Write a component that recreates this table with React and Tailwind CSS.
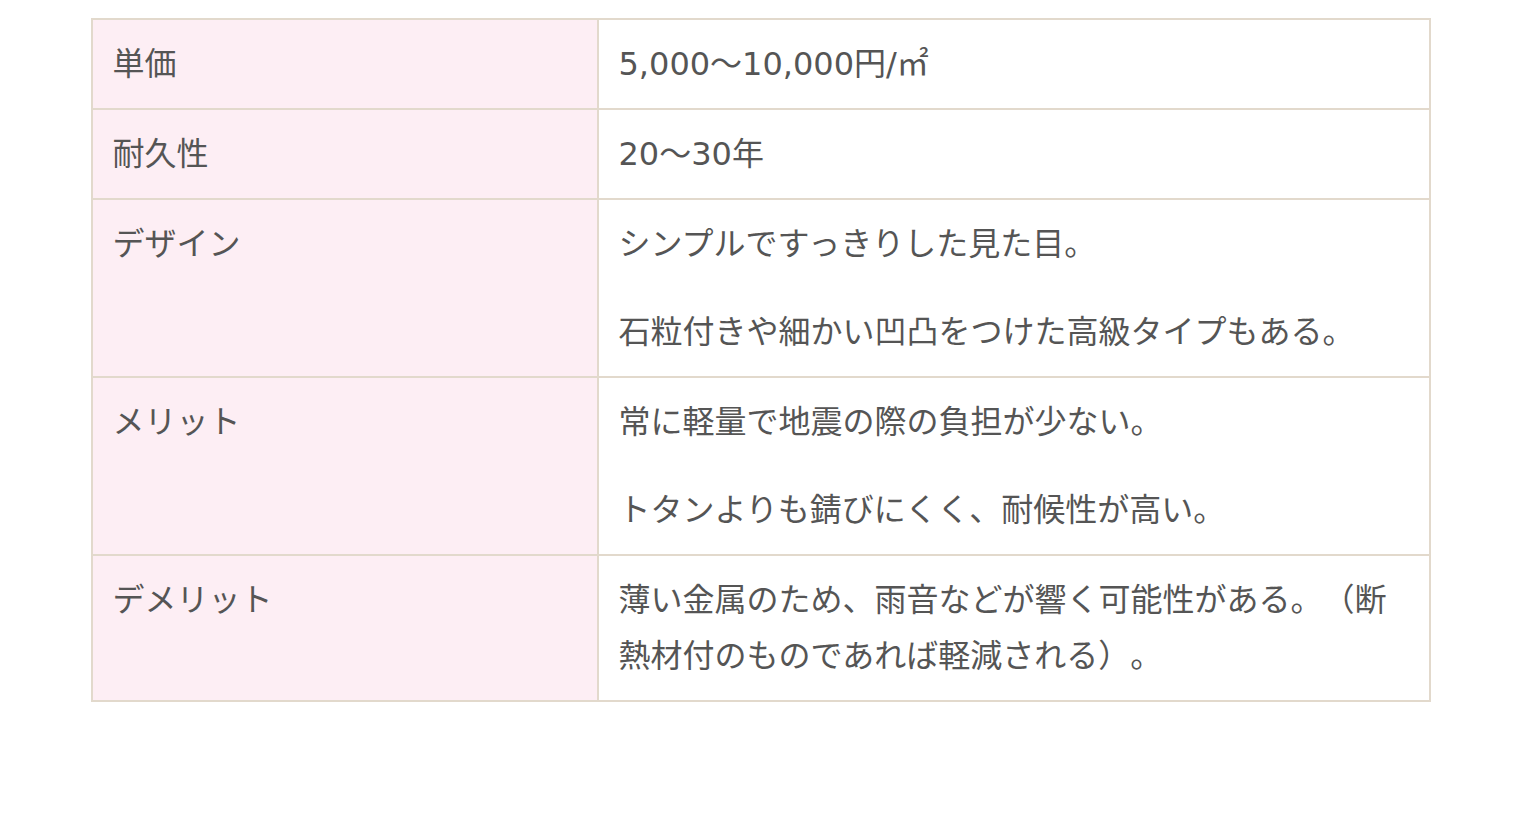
const rows = [
  { label: "単価", body: ["5,000〜10,000円/㎡"] },
  { label: "耐久性", body: ["20〜30年"] },
  {
    label: "デザイン",
    body: ["シンプルですっきりした見た目。", "石粒付きや細かい凹凸をつけた高級タイプもある。"],
  },
  {
    label: "メリット",
    body: ["常に軽量で地震の際の負担が少ない。", "トタンよりも錆びにくく、耐候性が高い。"],
  },
  {
    label: "デメリット",
    body: ["薄い金属のため、雨音などが響く可能性がある。（断熱材付のものであれば軽減される）。"],
  },
];

export default function App() {
  return (
    <div
      className="min-h-screen bg-white pt-[18px] [text-spacing-trim:space-all]"
      style={{ fontFamily: '"DejaVu Sans", "Noto Sans CJK JP", sans-serif' }}
    >
      <table className="mx-auto w-[1340px] border-collapse text-[32px] leading-[56px] text-[#555]">
        <tbody>
          {rows.map((row) => (
            <tr key={row.label}>
              <th className="w-[506px] border-2 border-[#e2d9cc] bg-[#fdeef4] px-5 py-4 text-left align-top font-normal">
                {row.label}
              </th>
              <td className="border-2 border-[#e2d9cc] bg-white px-5 py-4 align-top">
                {row.body.map((p, i) => (
                  <p key={i} className={i > 0 ? "mt-8" : ""}>
                    {p}
                  </p>
                ))}
              </td>
            </tr>
          ))}
        </tbody>
      </table>
    </div>
  );
}
